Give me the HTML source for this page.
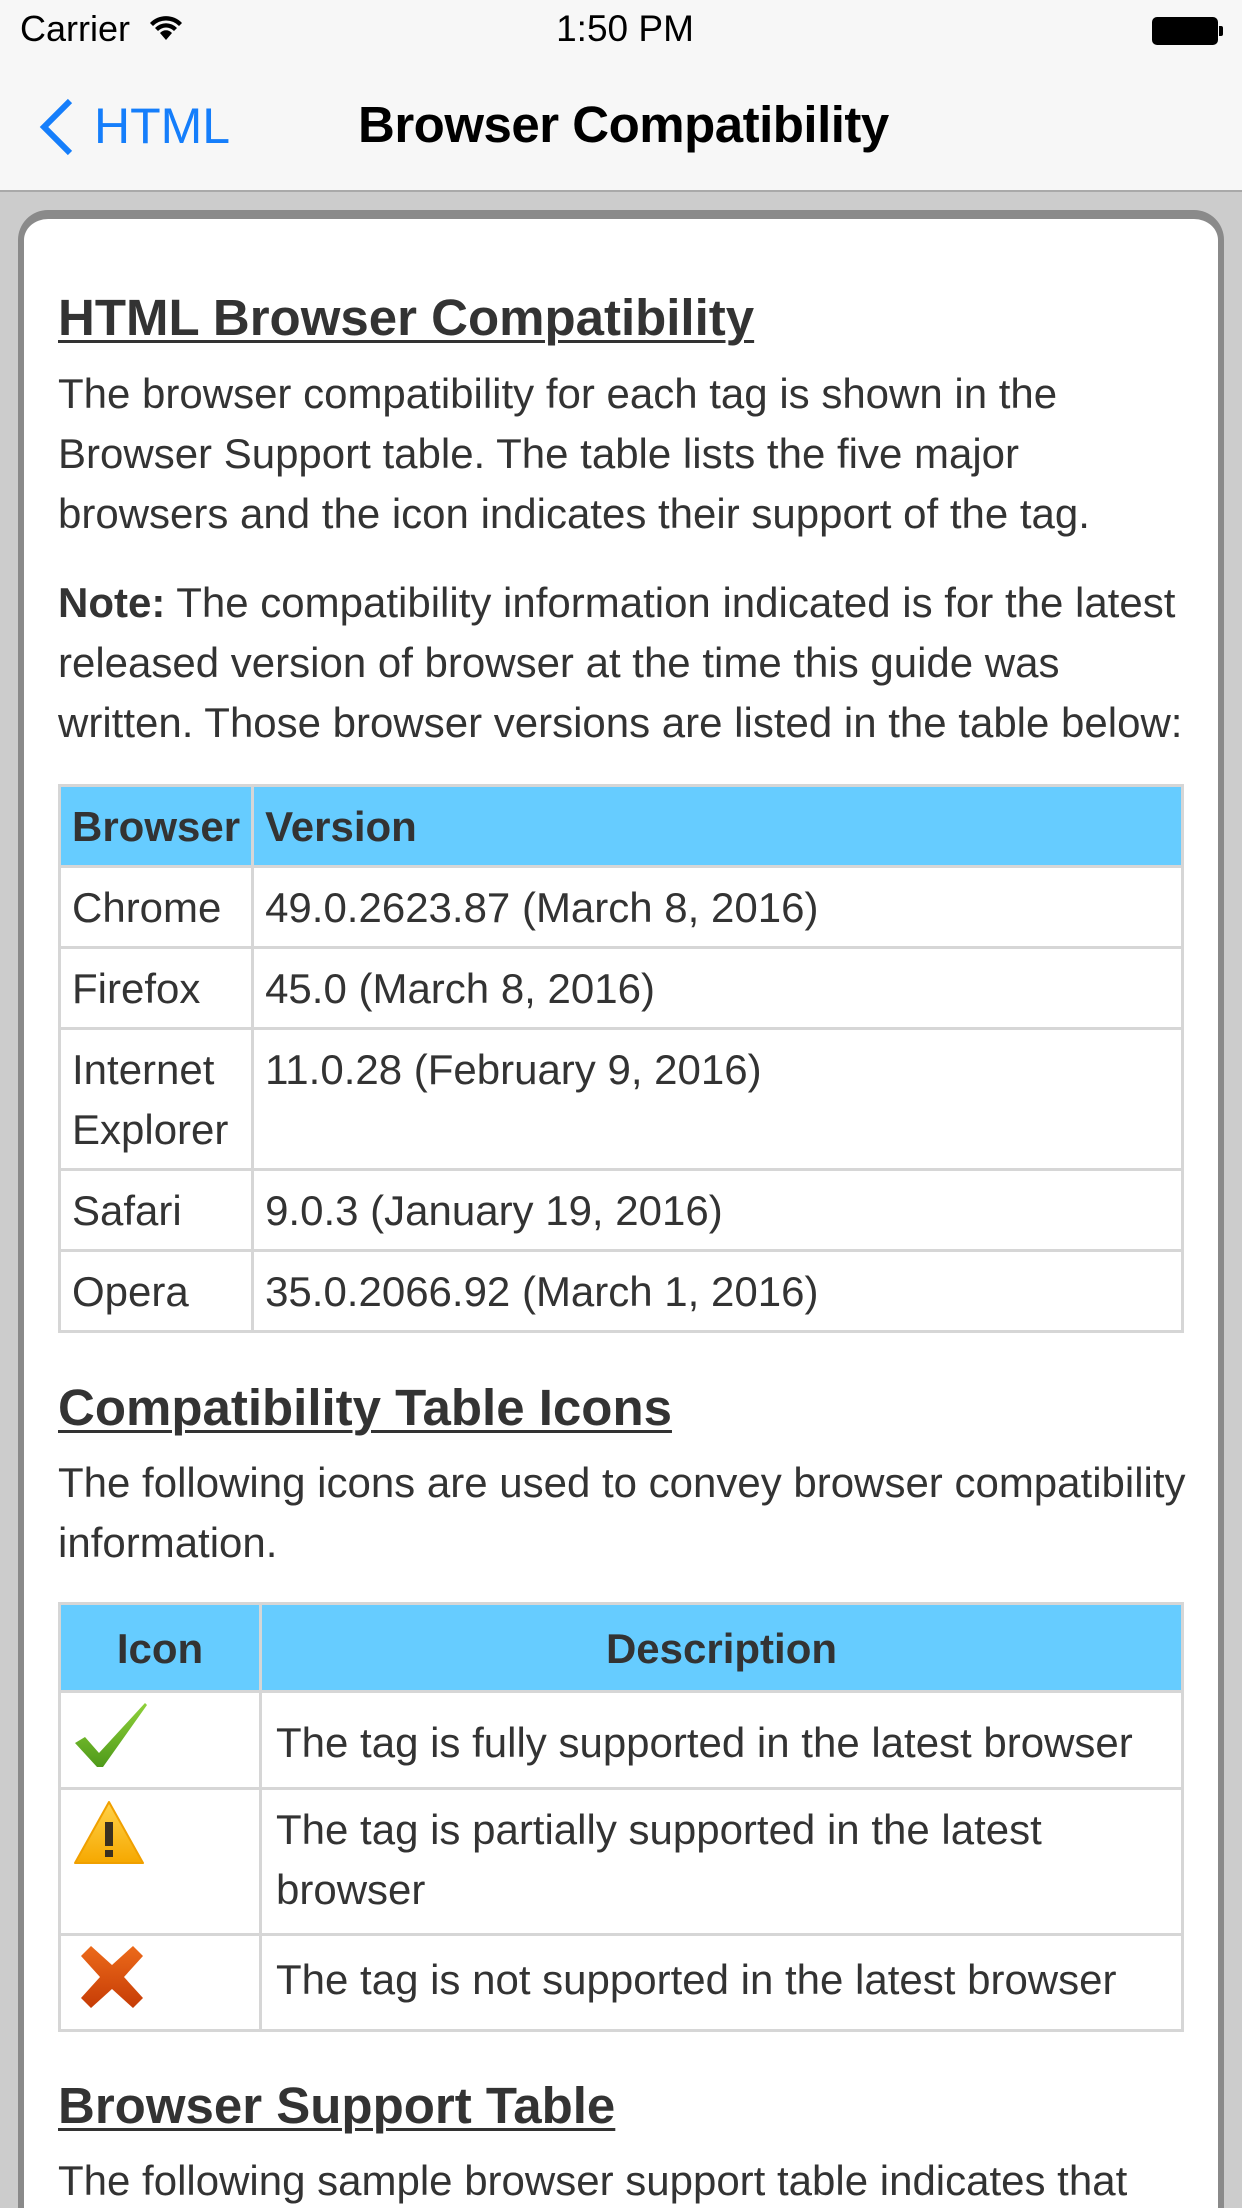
<!DOCTYPE html>
<html style="overflow:hidden;height:2208px"><head><meta charset="utf-8"><style>
*{margin:0;padding:0;box-sizing:border-box}
body{width:1242px;height:2208px;overflow:hidden;background:#cccccc;font-family:"Liberation Sans",Arial,sans-serif;color:#333}
.wrap{position:relative;width:1242px;height:2208px;overflow:hidden}
.status{position:absolute;left:0;top:0;width:1242px;height:192px;background:#f7f7f7;border-bottom:2px solid #a9a9a9}
.abs{position:absolute;white-space:nowrap}
.card{position:absolute;left:18px;top:210px;width:1206px;height:2060px;background:#fff;border:6px solid #8a8a8a;border-top-width:9px;border-radius:30px}
.t{position:absolute;left:58px;font-size:42px;line-height:60px;white-space:nowrap;color:#333}
h2{position:absolute;left:58px;font-size:51px;line-height:60px;font-weight:bold;text-decoration:underline;text-decoration-thickness:3px;text-underline-offset:5px;color:#333;white-space:nowrap}
table{position:absolute;left:58px;width:1126px;border-collapse:collapse;font-size:42px;color:#333}
td,th{border:3px solid #d6d6d6;padding:0 11px;vertical-align:top;line-height:60px;white-space:nowrap}
th{background:#66ccff;font-weight:bold;text-align:left}
</style></head><body><div class="wrap">
<div class="status">
 <div class="abs" style="left:20px;top:8px;font-size:36px;color:#000">Carrier</div>
 <svg class="abs" style="left:148px;top:14px" width="36" height="28" viewBox="0 0 36 28"><path d="M2 9 A22 22 0 0 1 34 9 L31 12 A18 18 0 0 0 5 12Z M7 14 A15 15 0 0 1 29 14 L26 17 A11 11 0 0 0 10 17Z M12 19 A8 8 0 0 1 24 19 L18 26Z" fill="#000"/></svg>
 <div class="abs" style="left:0;width:1250px;text-align:center;top:8px;font-size:37px;color:#000">1:50 PM</div>
 <div class="abs" style="left:1152px;top:17px;width:66px;height:28px;border:2px solid #000;border-radius:5px;background:#000"></div>
 <div class="abs" style="left:1219px;top:26px;width:4px;height:10px;background:#000;border-radius:0 2px 2px 0"></div>
 <svg class="abs" style="left:36px;top:98px" width="40" height="58" viewBox="0 0 40 58"><path d="M34 3 L8 29 L34 55" fill="none" stroke="#157efb" stroke-width="6"/></svg>
 <div class="abs" style="left:94px;top:97px;font-size:50px;color:#157efb">HTML</div>
 <div class="abs" style="left:358px;top:95px;font-size:51px;font-weight:bold;color:#000;letter-spacing:-0.5px">Browser Compatibility</div>
</div>
<div class="card"></div>
<h2 style="top:288px">HTML Browser Compatibility</h2>
<div class="t" style="top:364px">The browser compatibility for each tag is shown in the<br>Browser Support table. The table lists the five major<br>browsers and the icon indicates their support of the tag.</div>
<div class="t" style="top:573px"><b>Note:</b> The compatibility information indicated is for the latest<br>released version of browser at the time this guide was<br>written. Those browser versions are listed in the table below:</div>
<table style="top:784px">
<tr style="height:81px"><th style="width:193px;padding-top:10px">Browser</th><th style="padding-top:10px">Version</th></tr>
<tr style="height:81px"><td style="padding-top:10px">Chrome</td><td style="padding-top:10px">49.0.2623.87 (March 8, 2016)</td></tr>
<tr style="height:81px"><td style="padding-top:10px">Firefox</td><td style="padding-top:10px">45.0 (March 8, 2016)</td></tr>
<tr style="height:141px"><td style="padding-top:10px">Internet<br>Explorer</td><td style="padding-top:10px">11.0.28 (February 9, 2016)</td></tr>
<tr style="height:81px"><td style="padding-top:10px">Safari</td><td style="padding-top:10px">9.0.3 (January 19, 2016)</td></tr>
<tr style="height:81px"><td style="padding-top:10px">Opera</td><td style="padding-top:10px">35.0.2066.92 (March 1, 2016)</td></tr>
</table>
<h2 style="top:1378px">Compatibility Table Icons</h2>
<div class="t" style="top:1453px">The following icons are used to convey browser compatibility<br>information.</div>
<table style="top:1602px">
<tr style="height:88px"><th style="width:201px;text-align:center;padding-top:14px">Icon</th><th style="text-align:center;padding-top:14px">Description</th></tr>
<tr style="height:97px"><td style="padding:8px 0 0 12px"><svg width="76" height="70" viewBox="0 0 76 70"><defs><linearGradient id="g" x1="0" y1="0" x2="0" y2="1"><stop offset="0" stop-color="#8fd13a"/><stop offset="1" stop-color="#4f9a1a"/></linearGradient></defs><path d="M2 42 L12 36 L26 52 L72 2 L74 4 L30 66 L24 66Z" fill="url(#g)"/></svg></td><td style="padding:20px 14px 0">The tag is fully supported in the latest browser</td></tr>
<tr style="height:146px"><td style="padding:10px 0 0 12px"><svg width="72" height="66" viewBox="0 0 72 66"><defs><linearGradient id="w" x1="0" y1="0" x2="0" y2="1"><stop offset="0" stop-color="#ffd24a"/><stop offset="1" stop-color="#f6a800"/></linearGradient></defs><path d="M36 2 L70 63 L2 63Z" fill="url(#w)" stroke="#f0a000" stroke-width="2" stroke-linejoin="round"/><rect x="32" y="22" width="8" height="24" fill="#3a3020"/><rect x="32" y="50" width="8" height="7" fill="#3a3020"/></svg></td><td style="padding:10px 14px 0">The tag is partially supported in the latest<br>browser</td></tr>
<tr style="height:96px"><td style="padding:8px 0 0 18px"><svg width="66" height="66" viewBox="0 0 66 66"><defs><linearGradient id="x" x1="0" y1="0" x2="0" y2="1"><stop offset="0" stop-color="#ec6a1a"/><stop offset="1" stop-color="#c63c06"/></linearGradient></defs><path d="M12 2 L33 21 L54 2 L64 12 L45 33 L64 54 L54 64 L33 45 L12 64 L2 54 L21 33 L2 12Z" fill="url(#x)"/></svg></td><td style="padding:14px 14px 0">The tag is not supported in the latest browser</td></tr>
</table>
<h2 style="top:2076px">Browser Support Table</h2>
<div class="t" style="top:2151px">The following sample browser support table indicates that</div>
</div></body></html>
